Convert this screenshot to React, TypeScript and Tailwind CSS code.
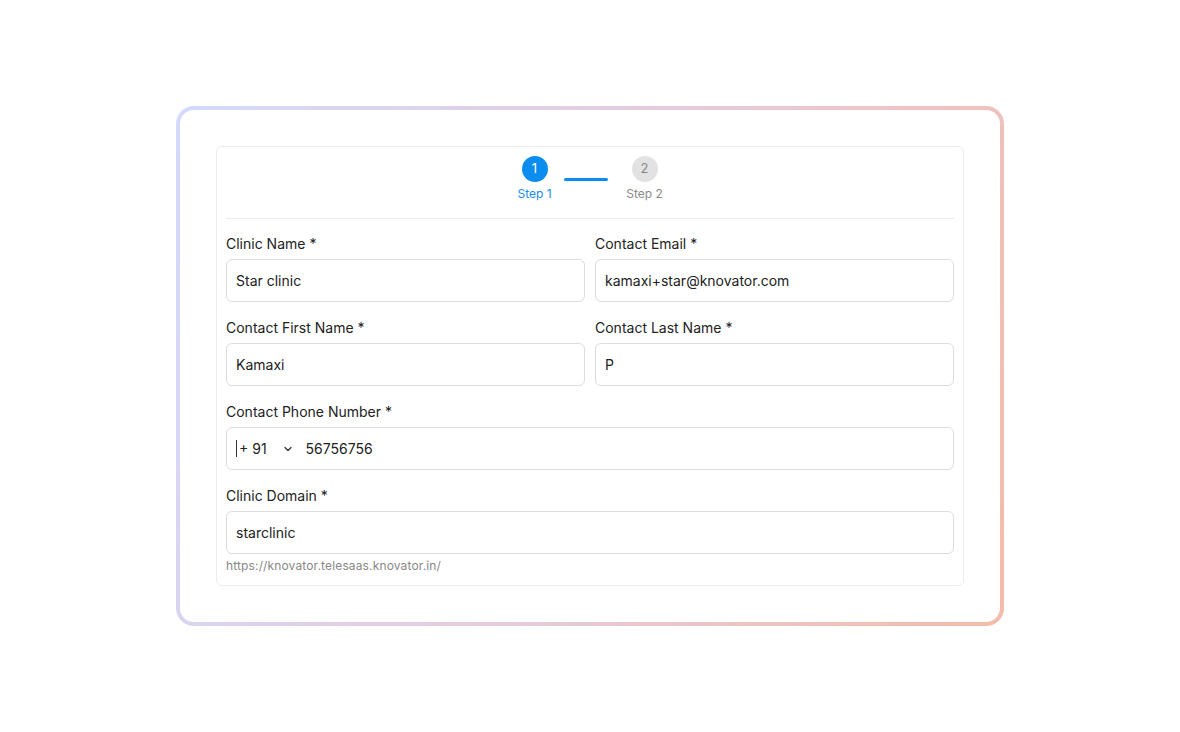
import { ChevronDown } from 'lucide-react';

function Campo({ label, valor }: { label: string; valor: string }) {
  return (
    <div className="flex flex-col">
      <label className="text-[14px] leading-5 text-[#222]">{label}</label>
      <div className="mt-[5px] h-[43px] flex items-center border border-[#dcdcdc] rounded-[6px] px-[9px] text-[14px] text-[#222]">
        {valor}
      </div>
    </div>
  );
}

export default function App() {
  return (
    <div className="min-h-screen bg-white flex items-center justify-center font-['Inter',sans-serif]">
      <div className="w-[828px] p-1 rounded-[18px] bg-[linear-gradient(110deg,#d3dafc,#e6cbdc_50%,#f4bba9)]">
        <div className="bg-white rounded-[14px] p-[36px]">
          <div className="border border-[#ececec] rounded-[6px] px-[9px] pt-[9px] pb-[11px]">
            {/* stepper */}
            <div className="flex justify-center items-start">
              <div className="w-[36px] flex flex-col items-center">
                <div className="w-[26px] h-[26px] rounded-full bg-[#0b8df0] text-white text-[13px] flex items-center justify-center">1</div>
                <span className="mt-[4px] text-[12px] leading-4 text-[#1a8cec] whitespace-nowrap">Step 1</span>
              </div>
              <div className="ml-[11px] mr-[18px] mt-[22px] w-[44px] h-[3px] rounded-full bg-[#0b8df0]" />
              <div className="w-[38px] flex flex-col items-center">
                <div className="w-[26px] h-[26px] rounded-full bg-[#e2e2e2] text-[#888] text-[13px] flex items-center justify-center">2</div>
                <span className="mt-[4px] text-[12px] leading-4 text-[#8a8a8a] whitespace-nowrap">Step 2</span>
              </div>
            </div>
            <div className="mt-[16px] border-t border-[#ececec]" />

            <div className="mt-[15px] grid grid-cols-2 gap-x-[10px] gap-y-[16px]">
              <Campo label="Clinic Name *" valor="Star clinic" />
              <Campo label="Contact Email *" valor="kamaxi+star@knovator.com" />
              <Campo label="Contact First Name *" valor="Kamaxi" />
              <Campo label="Contact Last Name *" valor="P" />
              <div className="col-span-2 flex flex-col">
                <label className="text-[14px] leading-5 text-[#222]">Contact Phone Number *</label>
                <div className="mt-[5px] h-[43px] flex items-center border border-[#dcdcdc] rounded-[6px] px-[9px] text-[14px] text-[#222]">
                  <span className="w-px h-[17px] bg-[#333] mr-[2px]" />
                  <span>+ 91</span>
                  <ChevronDown size={12} strokeWidth={2.5} className="ml-[15px] text-[#333]" />
                  <span className="ml-[12px]">56756756</span>
                </div>
              </div>
              <div className="col-span-2 flex flex-col">
                <Campo label="Clinic Domain *" valor="starclinic" />
                <span className="mt-[4px] text-[12px] leading-4 tracking-[0.14px] text-[#888]">https://knovator.telesaas.knovator.in/</span>
              </div>
            </div>
          </div>
        </div>
      </div>
    </div>
  );
}
